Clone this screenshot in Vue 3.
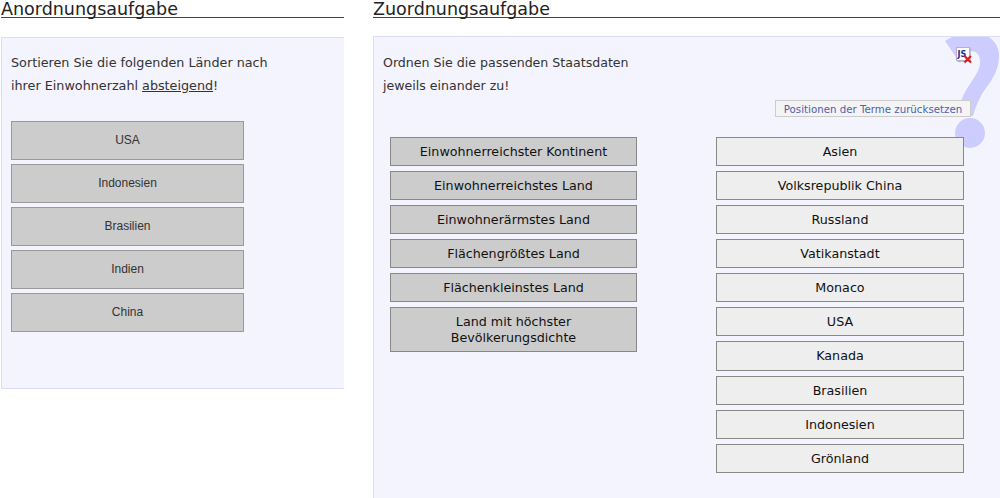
<script setup>
const sortItems = ['USA', 'Indonesien', 'Brasilien', 'Indien', 'China']
const leftTerms = [
  'Einwohnerreichster Kontinent',
  'Einwohnerreichstes Land',
  'Einwohnerärmstes Land',
  'Flächengrößtes Land',
  'Flächenkleinstes Land',
  'Land mit höchster Bevölkerungsdichte'
]
const rightTerms = ['Asien', 'Volksrepublik China', 'Russland', 'Vatikanstadt', 'Monaco', 'USA', 'Kanada', 'Brasilien', 'Indonesien', 'Grönland']
</script>

<template>
  <div class="page">
    <section class="task task-sort">
      <h2 class="title">Anordnungsaufgabe</h2>
      <div class="panel panel-sort">
        <p class="intro">Sortieren Sie die folgenden Länder nach<br />ihrer Einwohnerzahl <u>absteigend</u>!</p>
        <div class="sort-list">
          <div v-for="item in sortItems" :key="item" class="sort-item">{{ item }}</div>
        </div>
      </div>
    </section>

    <section class="task task-match">
      <h2 class="title">Zuordnungsaufgabe</h2>
      <div class="panel panel-match">
        <!-- big help mark behind the panel content -->
        <svg class="help-mark" width="60" height="125" viewBox="940 30 60 125">
          <path d="M945 41 C952 36 962 33 973 33 C988 33 999 42 999 56 C999 72 990 82 982 94 C978 101 975 108 973 116 L958 116 C959 104 963 94 970 84 C976 75 981 68 980 60 C979 54 976 51 971 51 C966 51 962 56 960 63 Z" fill="#ccccff" />
          <circle cx="970" cy="133" r="15" fill="#ccccff" />
        </svg>
        <svg class="js-icon" width="17" height="17" viewBox="0 0 17 17">
          <rect x="1.5" y="1.5" width="13" height="13" fill="#8f8f9c" />
          <rect x="0.5" y="0.5" width="13" height="13" fill="#fff" stroke="#b4b4c0" />
          <text x="1.5" y="10" font-size="8" font-weight="700" font-family="'DejaVu Sans', sans-serif" fill="#1c2aa8">JS</text>
          <path d="M8.5 9 L15 15.5 M15 9 L8.5 15.5" stroke="#d81e1e" stroke-width="2.2" />
        </svg>
        <p class="intro">Ordnen Sie die passenden Staatsdaten<br />jeweils einander zu!</p>
        <div class="reset-row">
          <button class="reset" type="button">Positionen der Terme zurücksetzen</button>
        </div>
        <div class="columns">
          <div class="col col-left">
            <div v-for="term in leftTerms" :key="term" class="term term-left">{{ term }}</div>
          </div>
          <div class="col col-right">
            <div v-for="term in rightTerms" :key="term" class="term term-right">{{ term }}</div>
          </div>
        </div>
      </div>
    </section>
  </div>
</template>

<style>
html, body {
  margin: 0;
  background: #fff;
  overflow: hidden;
}
</style>

<style scoped>
.page {
  display: flex;
  height: 498px;
  overflow: hidden;
  font-family: "DejaVu Sans", sans-serif;
  color: #333;
}

.task-sort {
  width: 343px;
  margin-left: 1px;
  flex-shrink: 0;
}

.task-match {
  width: 627px;
  margin-left: 29px;
  flex-shrink: 0;
}

.title {
  margin: 0;
  height: 17px;
  border-bottom: 1px solid #444;
  font-size: 17.5px;
  font-weight: 400;
  line-height: 19px;
  color: #222;
}

.panel {
  position: relative;
  box-sizing: border-box;
  background: #f4f4ff;
  border: 1px solid #dcdcfa;
  border-right: none;
  overflow: hidden;
}

.panel-sort {
  margin-top: 19px;
  height: 352px;
  padding: 13px 0 0 9px;
}

.panel-match {
  margin-top: 18px;
  height: 480px;
  padding: 14px 0 0 9px;
  border-bottom: none;
}

.intro {
  position: relative;
  margin: 0;
  font-size: 12.75px;
  line-height: 23px;
  color: #333;
}

.panel-match .intro {
  font-size: 12.6px;
}

.sort-list {
  display: flex;
  flex-direction: column;
  gap: 4.1px;
  margin-top: 24px;
  width: 233px;
}

.sort-item {
  box-sizing: border-box;
  height: 39px;
  padding-bottom: 1px;
  display: flex;
  align-items: center;
  justify-content: center;
  background: #ccc;
  border: 1px solid #999;
  font-family: "Liberation Sans", sans-serif;
  font-size: 12px;
  color: #333;
}

.help-mark {
  position: absolute;
  top: -7px;
  left: 566px;
}

.js-icon {
  position: absolute;
  top: 10px;
  left: 582px;
}

.reset-row {
  position: relative;
  display: flex;
  margin-top: 3px;
  padding-left: 392px;
}

.reset {
  box-sizing: border-box;
  width: 196px;
  height: 17px;
  padding: 0;
  background: #f4f4f4;
  border: 1px solid #ccc;
  font-family: "DejaVu Sans", sans-serif;
  font-size: 10.24px;
  color: #4a62b0;
}

.columns {
  position: relative;
  display: flex;
  gap: 79px;
  margin-top: 19.6px;
  padding-left: 7px;
}

.col {
  display: flex;
  flex-direction: column;
  gap: 5px;
}

.col-left {
  width: 247px;
}

.col-right {
  width: 248px;
}

.term {
  box-sizing: border-box;
  padding: 6px 20px 5.15px;
  border: 1px solid #888;
  font-size: 12.7px;
  line-height: 16px;
  text-align: center;
  color: #111;
}

.term-left {
  background: #ccc;
}

.term-right {
  background: #eee;
}
</style>
